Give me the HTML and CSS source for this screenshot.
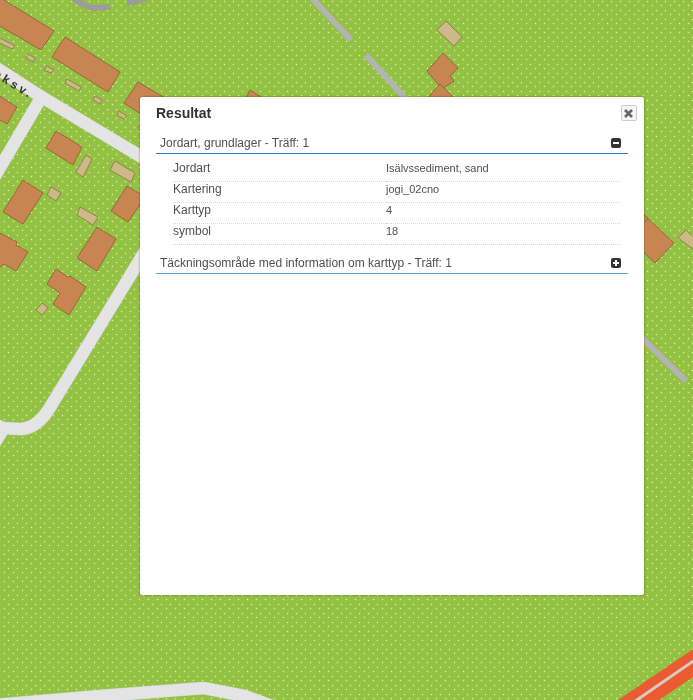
FILE: index.html
```html
<!DOCTYPE html>
<html lang="sv">
<head>
    <meta charset="UTF-8">
    <meta name="viewport" content="width=device-width, initial-scale=1.0">
    <title>Resultat</title>
    <link rel="stylesheet" href="styles.css">
</head>
<body>

    <!-- Karta -->
    <svg class="map" viewBox="0 0 693 700" preserveAspectRatio="xMidYMid slice" aria-hidden="true">
        <defs>
            <pattern id="sand" width="9" height="9" patternUnits="userSpaceOnUse">
                <rect class="ground" width="9" height="9"/>
                <path class="dot-glow" d="M3 5h3v1h-3zM4 4h1v3h-1zM8 0h1v3h-1zM7 1h2v1h-2zM0 1h1v1h-1z"/>
                <path class="dot" d="M4 5h1v1h-1zM8 1h1v1h-1z"/>
            </pattern>
        </defs>
        <rect width="693" height="700" fill="url(#sand)"/>

        <g class="track">
            <path d="M72 -3L82 4L92 8L110 7"/>
            <path d="M127 3L140 0L150 -3"/>
        </g>
        <g class="track light">
            <path d="M308 -6L351 40"/>
            <path d="M366 55L406 99"/>
            <path d="M642 338L686 381"/>
        </g>

        <g class="road-edge">
            <path d="M-5 67L40 96L150 162"/>
            <path d="M41 98L-8 181"/>
            <path d="M150 243L102 322L52 404Q38 429 20 429L3 428L-6 424"/>
            <path d="M4 428L-6 444"/>
            <path d="M-5 705L100 696L204 688L245 696L280 709"/>
        </g>
        <g class="road">
            <path d="M-5 67L40 96L150 162"/>
            <path d="M41 98L-8 181"/>
            <path d="M150 243L102 322L52 404Q38 429 20 429L3 428L-6 424"/>
            <path d="M4 428L-6 444"/>
            <path d="M-5 705L100 696L204 688L245 696L280 709"/>
        </g>
        <path class="highway" d="M618 714L705 655"/>
        <path class="highway-line" d="M618 713L705 653"/>

        <g class="house">
            <path d="M-2 -2L4 0L54 31L41 50L-2 25z"/>
            <path d="M65 37L120 72L108 92L52 57z"/>
            <path d="M138 82L165 98L150 120L124 103z"/>
            <path d="M-2 95L17 107L7 124L-2 119z"/>
            <path d="M56 131L82 147L73 165L46 148z"/>
            <path d="M23 180L43 193L23 224L3 212z"/>
            <path d="M127 186L145 197L128 222L111 211z"/>
            <path d="M97 227L116 239L97 271L77 258z"/>
            <path d="M-2 232L17 242L16 245L28 252L16 271L4 264L-2 269z"/>
            <path d="M56 269L68 277L70 276L86 287L69 315L53 304L60 293L47 284z"/>
            <path d="M250 90L272 104H243z"/>
            <path d="M443 53L458 68L450 76L454 81L442 89L427 71z"/>
            <path d="M440 84L458 102H424z"/>
            <path d="M640 211L674 243L655 263L640 249z"/>
            <path d="M642 213L648 218L645 222"/>
        </g>

        <g class="shed">
            <path d="M-2 37L15 46L12 49L-2 42z"/>
            <path d="M28 54L35 58L33 62L26 58z"/>
            <path d="M47 66L54 70L51 73L44 70z"/>
            <path d="M67 79L81 87L79 91L65 83z"/>
            <path d="M95 96L102 100L100 104L93 100z"/>
            <path d="M119 111L127 116L124 119L117 115z"/>
            <path d="M139 126L143 128L141 131L138 128z"/>
            <path d="M86 155L92 159L83 177L76 172z"/>
            <path d="M115 161L135 173L131 182L110 170z"/>
            <path d="M51 187L61 193L56 201L47 195z"/>
            <path d="M80 207L98 217L93 225L77 215z"/>
            <path d="M42 303L48 308L42 315L36 310z"/>
            <path d="M446 21L462 37L454 46L437 30z"/>
            <path d="M686 230L700 243V254L678 238z"/>
        </g>

        <path id="street" d="M-7 76L40 105" fill="none"/>
        <text class="street-name"><textPath href="#street">eksv.</textPath></text>
    </svg>

    <!-- Resultatfönster -->
    <section class="dialog" role="dialog" aria-labelledby="dialogTitle">
        <header class="dialog-header">
            <h1 id="dialogTitle">Resultat</h1>
            <button type="button" class="close" id="closeButton" aria-label="Stäng">
                <svg width="10" height="10" viewBox="0 0 10 10" aria-hidden="true">
                    <path d="M1 2L8 9M8 2L1 9" stroke="#666" stroke-width="2.6"/>
                </svg>
            </button>
        </header>

        <div class="layer">
            <button type="button" class="layer-header" aria-expanded="true" aria-controls="layer1">
                <span>Jordart, grundlager - Träff: 1</span>
                <svg class="toggle" viewBox="0 0 10 10" aria-hidden="true">
                    <rect width="10" height="10" rx="2"/>
                    <path d="M2 5H8"/>
                </svg>
            </button>
            <table class="attributes" id="layer1">
                <tbody>
                    <tr><th scope="row">Jordart</th><td>Isälvssediment, sand</td></tr>
                    <tr><th scope="row">Kartering</th><td>jogi_02cno</td></tr>
                    <tr><th scope="row">Karttyp</th><td>4</td></tr>
                    <tr><th scope="row">symbol</th><td>18</td></tr>
                </tbody>
            </table>
        </div>

        <div class="layer">
            <button type="button" class="layer-header collapsed" aria-expanded="false">
                <span>Täckningsområde med information om karttyp - Träff: 1</span>
                <svg class="toggle" viewBox="0 0 10 10" aria-hidden="true">
                    <rect width="10" height="10" rx="2"/>
                    <path d="M2 5H8M5 2V8"/>
                </svg>
            </button>
        </div>
    </section>

</body>
</html>
```
FILE: styles.css
```css
body {
    font-family: "Liberation Sans", Arial, sans-serif;
    font-size: 12px;
    background-color: #92c143;
    color: #505050;
    margin: 0;
    min-height: 100vh;
    overflow: hidden;
}

button {
    font-family: inherit;
    color: inherit;
    cursor: pointer;
}

/* Karta */
.map {
    position: fixed;
    inset: 0;
    width: 100%;
    height: 100%;
}

.ground {
    fill: #92c143;
}

.dot-glow {
    fill: #a0cb52;
}

.dot {
    fill: #d6f29a;
}

.track path {
    fill: none;
    stroke: #9b9d98;
    stroke-width: 6;
}

.track.light path {
    stroke: #b3b3b3;
}

.road-edge path {
    fill: none;
    stroke: #c3cdb2;
    stroke-width: 13;
}

.road path {
    fill: none;
    stroke: #e5e4e5;
    stroke-width: 12;
}

.highway {
    fill: none;
    stroke: #ea5b31;
    stroke-width: 23;
}

.highway-line {
    fill: none;
    stroke: #d9c9c5;
    stroke-width: 3;
}

.house path {
    fill: #c98551;
    stroke: #96683a;
    stroke-width: 1;
}

.shed path {
    fill: #cdb888;
    stroke: #94834f;
    stroke-width: 1;
}

.street-name {
    font-size: 12px;
    font-weight: bold;
    letter-spacing: 3px;
    fill: #333;
}

/* Resultatfönster */
.dialog {
    position: fixed;
    inset: 97px 49px 105px 140px;
    box-sizing: border-box;
    padding: 8px 16px;
    overflow: auto;
    background-color: #fff;
    border-radius: 2px;
    box-shadow: 0 0 2px rgba(0, 0, 0, 0.5);
}

.dialog-header {
    display: flex;
    justify-content: space-between;
    align-items: flex-start;
    margin-right: -9px;
    margin-bottom: 12px;
}

.dialog-header h1 {
    margin: 0;
    font-size: 14px;
    line-height: 16px;
    color: #333;
}

.close {
    display: flex;
    align-items: center;
    justify-content: center;
    width: 16px;
    height: 16px;
    padding: 0;
    background-color: #f6f6f6;
    border: 1px solid #ccc;
    border-radius: 2px;
}

.layer {
    margin-bottom: 8px;
}

.layer-header {
    display: flex;
    justify-content: space-between;
    align-items: center;
    width: 100%;
    padding: 0 7px 0 4px;
    background: none;
    border: 0;
    border-bottom: 1px solid #2a7fc0;
    font-size: 12px;
    line-height: 20px;
    text-align: left;
}

.layer-header.collapsed {
    border-bottom-color: #5ba5cf;
}

.toggle {
    width: 10px;
    height: 10px;
    fill: #333;
    stroke: #fff;
    stroke-width: 2;
}

.toggle rect {
    stroke: none;
}

.attributes {
    width: calc(100% - 25px);
    margin: 7px 8px 0 17px;
    border-collapse: collapse;
    table-layout: fixed;
}

.attributes th,
.attributes td {
    padding: 0 0 6px;
    border-bottom: 1px dotted #d5d5d5;
    line-height: 14px;
    text-align: left;
    font-weight: normal;
}

.attributes th {
    width: 213px;
    font-size: 12px;
}

.attributes td {
    font-size: 11px;
}
```
